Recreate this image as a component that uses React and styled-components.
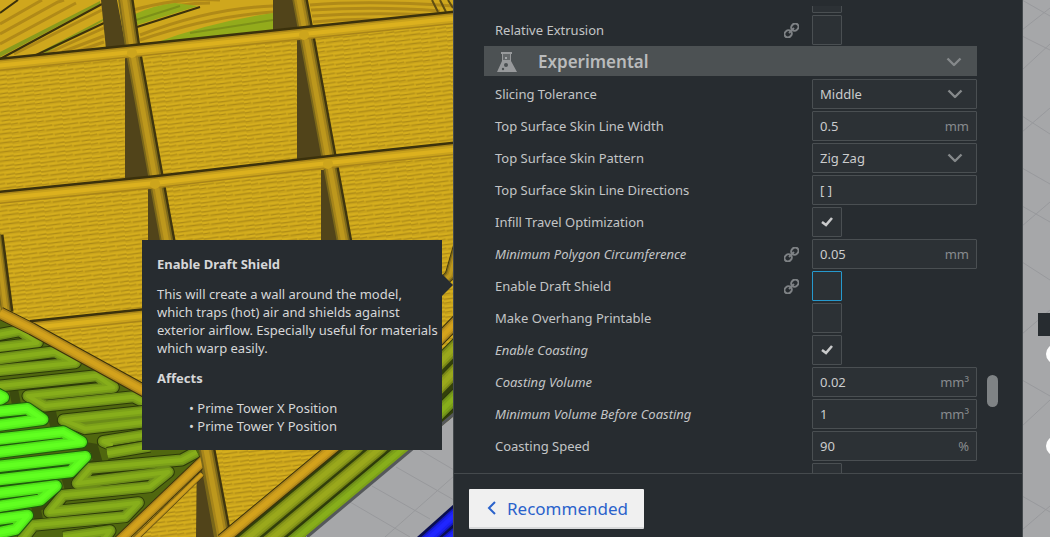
import { useLayoutEffect, useRef } from 'react';
import styled, { createGlobalStyle } from 'styled-components';

const GlobalStyle = createGlobalStyle`
  * {
    box-sizing: border-box;
  }

  body {
    margin: 0;
    background: #a6a7a9;
    color: #cbcccd;
    font-family: 'Noto Sans', sans-serif;
    font-size: 13px;
    line-height: 18px;
  }

  input,
  select,
  button {
    font: inherit;
    color: inherit;
  }
`;

const Workspace = styled.div`
  position: relative;
  display: flex;
  height: 100vh;
  overflow: hidden;
`;

const Scene = styled.svg`
  position: absolute;
  inset: 0;
  width: 100%;
  height: 100%;
`;

const Viewport = styled.main`
  position: relative;
  flex: 1;
  min-width: 0;
`;

const Tooltip = styled.aside`
  position: absolute;
  top: 240px;
  right: 11px;
  display: flex;
  flex-direction: column;
  gap: 12px;
  width: 300px;
  padding: 15px 0 15px 15px;
  background: #272c30;
  color: #d6d7d8;

  &::after {
    content: '';
    position: absolute;
    top: 34px;
    left: 100%;
    border: 11px solid transparent;
    border-right-width: 0;
    border-left-color: #272c30;
  }
`;

const TooltipTitle = styled.h2`
  margin: 0;
  font-size: 13px;
  font-weight: 700;
`;

const TooltipText = styled.p`
  margin: 0;
`;

const AffectsList = styled.ul`
  margin: 0;
  padding: 0 0 0 32px;
  list-style: none;

  li::before {
    content: '• ';
  }
`;

const Panel = styled.section`
  position: relative;
  display: flex;
  flex-direction: column;
  width: 570px;
  margin-right: 27px;
  padding-top: 6px;
  background: #272c30;
  border: solid #454a4d;
  border-width: 0 1px;
`;

const Settings = styled.div`
  flex: 1;
  min-height: 0;
  padding: 0 45px 0 30px;
  overflow-y: auto;
  scrollbar-width: none;
`;

const ScrollThumb = styled.div`
  position: absolute;
  top: 375px;
  right: 24px;
  width: 11px;
  height: 32px;
  border-radius: 6px;
  background: #7f8385;
`;

const Row = styled.div`
  display: flex;
  align-items: center;
  height: 30px;
  margin-bottom: 2px;
  padding-left: 11px;
`;

const Label = styled.label`
  flex: 1;
  color: #c3c5c6;
  font-style: ${(props) => (props.$italic ? 'italic' : 'normal')};
`;

const LinkIcon = styled.svg`
  width: 15px;
  height: 15px;
  margin-right: 13px;
  fill: none;
  stroke: #7e8285;
  stroke-width: 2;
`;

const ControlSlot = styled.div`
  width: 165px;
`;

const Field = styled.div`
  display: flex;
  align-items: center;
  height: 30px;
  padding: 0 7px;
  background: #2c3135;
  border: 1px solid #4a4f52;
  border-radius: 1px;
`;

const TextInput = styled.input`
  flex: 1;
  min-width: 0;
  padding: 0;
  border: 0;
  outline: 0;
  background: none;
`;

const Unit = styled.span`
  color: #888b8e;
`;

const Select = styled.select`
  flex: 1;
  min-width: 0;
  padding: 0;
  border: 0;
  outline: 0;
  background: none;
  appearance: none;
`;

const ChevronIcon = styled.svg`
  width: 16px;
  height: 10px;
  margin-right: ${(props) => props.$inset || 6}px;
  fill: none;
  stroke: #85898b;
  stroke-width: 2.4;
  stroke-linejoin: round;
`;

const CheckSlot = styled.span`
  display: grid;
  width: 30px;
  height: 30px;
  place-items: center;

  & > * {
    grid-area: 1 / 1;
  }
`;

const Checkbox = styled.input`
  width: 30px;
  height: 30px;
  margin: 0;
  appearance: none;
  background: #2c3135;
  border: 1px solid ${(props) => (props.$active ? '#2699cd' : '#4a4f52')};
  border-radius: 1px;
`;

const CheckIcon = styled.svg`
  width: 14px;
  height: 12px;
  fill: none;
  stroke: #c9cacb;
  stroke-width: 2.6;
  pointer-events: none;
`;

const Category = styled.button`
  display: flex;
  align-items: center;
  width: 100%;
  height: 30px;
  margin: -1px 0 3px;
  padding: 2px 0 0 13px;
  border: 0;
  background: #4c5153;
  color: #b9bbbc;
  text-align: left;
`;

const CategoryIcon = styled.svg`
  width: 20px;
  height: 20px;
  margin-right: 21px;
`;

const CategoryTitle = styled.span`
  flex: 1;
  font-size: 17px;
  font-weight: 600;
`;

const Footer = styled.footer`
  padding: 15px 15px 8px;
  border-top: 1px solid #454a4d;
`;

const ModeButton = styled.button`
  display: flex;
  align-items: center;
  gap: 11px;
  height: 40px;
  padding: 2px 16px 0 18px;
  border: 0;
  border-bottom: 2px solid #d8d9da;
  border-radius: 1px;
  background: #f0f0f0;
  color: #2a62cb;
  font-size: 17px;
`;

const BackIcon = styled.svg`
  width: 9px;
  height: 16px;
  fill: none;
  stroke: #2a62cb;
  stroke-width: 2;
`;

const tones = {
  gold: ['#3b310c', '#a98519', '#c9a21c', '#dcb11e'],
  shade: ['#3f350e', '#7a671a', '#a6851b', '#bd981d'],
  orange: ['#3b310c', '#a8821a', '#c8991c', '#d3a21c'],
  olive: ['#2c3a09', '#6c8c19', '#7ca119', '#87ae1b'],
  moss: ['#33400c', '#778516', '#8f9e1a', '#9aa81c'],
  lime: ['#1f5a0e', '#4fdc18', '#5af71d', '#61ff20'],
  blue: ['#0a0f50', '#1318c0', '#1b20f0', '#2026ff'],
};

// rim moves the dark layer aside, so only one side of the ridge casts a shadow
function Ridge({ d, tone = 'gold', width = 11, rim }) {
  const steps = [rim ? -1 : 2, 0, -3, -7];
  return tones[tone].map((color, i) => (
    <path
      key={color}
      d={d}
      fill="none"
      stroke={color}
      strokeWidth={Math.max(width + steps[i] * (width / 11), 1)}
      strokeLinejoin="round"
      transform={rim && i === 0 ? `translate(${rim})` : undefined}
    />
  ));
}

const oliveLoops = [
  'M-9 -75 L60 -88 L112 -52 L-9 -37',
  'M-9 -3 L165 -25 L226 8 L-9 32',
  'M-9 79 L290 47 L340 82 L84 108 L135 138 L400 110 L450 135',
  'M450 152 L190 180 L255 206 L450 184',
  'M450 222 L310 244 L338 256',
  'M322 280 L450 258',
  'M590 276 L545 300 L270 325 L232 370 L440 344 L505 336 L450 380 L190 406 L148 456 L350 436 L415 428 L375 470 L100 496 L66 540',
  'M190 532 L330 512 L310 540',
];

const limeLoops = [
  'M-9 102 L10 112 L-9 124',
  'M-9 155 L82 146 L128 178 L-9 196',
  'M-9 238 L190 216 L244 246 L-9 277',
  'M-9 320 L256 290 L212 335 L-9 360',
  'M-9 400 L168 378 L120 420 L-9 440',
  'M-9 478 L82 466 L46 508 L-9 520',
];

function PrintScene() {
  return (
    <Scene viewBox="0 0 1050 537" preserveAspectRatio="xMinYMin slice" aria-hidden="true">
      <defs>
        <pattern
          id="layers"
          width="26"
          height="9"
          patternUnits="userSpaceOnUse"
          patternTransform="rotate(-5)"
        >
          <rect width="26" height="9" fill="#c8a21b" />
          <path d="M0 2 L26 1 M0 6 L26 5" stroke="#d6af1d" strokeWidth="2" />
          <path d="M0 4 L15 3 M17 4 L26 3 M0 8 L7 7 M9 8 L26 7" stroke="#ac8917" strokeWidth="1" />
        </pattern>
        <clipPath id="model">
          <path d="M0 0 H454 V416 L412 450 L305 537 H0 Z" />
        </clipPath>
      </defs>

      <rect width="1050" height="537" fill="#a6a7a9" />
      <g stroke="#98999c" strokeWidth="1">
        <path d="M396 467 L454 500 M385 537 L454 476 M350 502 L410 537 M372 486 L430 519 M420 450 L454 470" />
        <path d="M1022 0 L1050 16 M1022 30 L1050 8 M1022 70 L1050 44 M1022 36 L1050 50 M1022 116 L1050 134 M1022 132 L1050 108 M1022 168 L1050 184 M1022 206 L1050 222 M1022 226 L1050 202 M1022 262 L1050 280 M1022 334 L1050 310 M1022 380 L1050 396 M1022 426 L1050 400 M1022 496 L1050 512 M1022 530 L1050 506" />
      </g>

      <g clipPath="url(#model)">
        <rect width="454" height="537" fill="url(#layers)" />

        <path d="M0 0 H454 V18 L0 62 Z" fill="#cfa71d" />
        <g fill="none" stroke="#b08a18" strokeWidth="3">
          <path d="M0 24 L42 0 M0 34 L58 2 L64 0 M0 44 L76 3 M14 54 L102 10 M46 54 L104 28 M62 52 L104 36 M78 51 L104 42" />
          <path d="M133 10 Q180 -3 220 0 M140 35 Q210 8 273 6 M140 40 Q210 16 273 12 M150 12 Q180 3 210 3" />
          <path d="M310 5 Q370 0 454 6 M311 10 Q380 6 440 11 M312 16 Q370 12 430 15 M313 22 Q350 18 390 20" />
        </g>
        <path d="M0 52 L100 1 L100 4 L0 57 Z M40 52 L103 19 V21 L46 53 Z" fill="#8a9a1c" />
        <path
          d="M0 13 L18 0 M0 59 L102 4 M34 56 L104 23 M137 27 L200 7"
          fill="none"
          stroke="#3b310c"
          strokeWidth="2"
        />
        <path d="M135 14 Q155 5 175 3 L198 6 L137 25 Z" fill="#93ab1b" />
        <path d="M155 43 Q210 22 273 13 V30 Z" fill="#93ab1b" />
        <path d="M136 20 L180 6 M190 33 L273 20" stroke="#7c9018" strokeWidth="2" />
        <path d="M432 0 L438 12 M440 0 L446 12 M448 0 L453 8" stroke="#5f4d12" strokeWidth="2" />

        <g fill="#51441a">
          <path d="M101 0 H117 L126 48 L106 49 Z" />
          <path d="M273 0 H293 L299 30 L273 33 Z" />
          <path d="M125 56 L134 56 L152 181 L125 183 Z" />
          <path d="M297 38 L305 38 L325 162 L297 164 Z" />
          <path d="M148 188 L156 188 L170 244 L148 244 Z" />
          <path d="M321 170 L330 170 L344 244 L321 244 Z" />
          <path d="M197 450 L208 450 L220 537 L196 537 Z" />
        </g>
        <Ridge tone="shade" width={13} rim="3 0" d="M124 -5 L132 50 L156 183 L205 450 L222 545" />
        <Ridge tone="shade" width={13} rim="3 0" d="M298 -5 L305 32 L329 163 L345 250" />
        <Ridge tone="shade" width={10} rim="3 0" d="M-4 235 L6 312" />
        <Ridge rim="0 -3" d="M-5 66 L132 52 L304 34 L460 18" />
        <Ridge rim="0 -3" d="M-5 199 L155 183 L328 163 L460 149" />
        <Ridge rim="0 -3" d="M30 328 L240 306" />
        <Ridge tone="shade" width={9} d="M460 240 L450 275 L430 295" />
        <g fill="#cda51c">
          <circle cx="132" cy="53" r="5" />
          <circle cx="304" cy="35" r="5" />
          <circle cx="155" cy="184" r="5" />
          <circle cx="328" cy="164" r="5" />
        </g>

        <path d="M0 316 L30 330 L142 392 L205 452 L118 537 H0 Z" fill="#50670f" />
        <path
          d="M12 382 L18 412 L52 414 L58 442 L94 448 L98 462 L66 478 L70 492 L36 508 L40 526"
          fill="none"
          stroke="#3b4a0e"
          strokeWidth="9"
        />
        <g transform="translate(0 360) scale(0.3333)">
          {oliveLoops.map((d) => (
            <Ridge key={d} tone="olive" width={33} d={d} />
          ))}
          {limeLoops.map((d) => (
            <Ridge key={d} tone="lime" width={34} d={d} />
          ))}
        </g>
        <Ridge tone="orange" width={11} d="M0 313 L32 329 L150 394" />
        <Ridge tone="orange" width={10} d="M204 460 L116 544" />
        <Ridge tone="orange" width={5} d="M202 474 L130 544" />
        <Ridge tone="shade" width={14} rim="3 0" d="M205 444 L224 545" />

        <path d="M228 537 L454 350 V416 L305 537 Z" fill="#33400c" />
        <Ridge tone="orange" width={11} d="M222 540 L335 446 L460 318" />
        <Ridge tone="moss" width={13} d="M242 543 L356 448 L460 342" />
        <Ridge tone="moss" width={13} d="M264 545 L380 448 L460 366" />
        <Ridge tone="olive" width={13} d="M286 547 L404 448 L460 392" />
      </g>
      <path d="M307 537 L454 414" stroke="#55585b" strokeWidth="3" />
      <path d="M417 537 L454 504 V537 Z" fill="#0a0f50" />
      <Ridge tone="blue" width={12} d="M416 550 L460 510" />
      <Ridge tone="blue" width={12} d="M434 552 L460 530" />

      <path d="M1038 313 H1050 V336 H1038 Z" fill="#272c30" />
      <circle cx="1056" cy="354" r="10" fill="#ffffff" />
      <circle cx="1056" cy="446" r="10" fill="#ffffff" />
    </Scene>
  );
}

function Chevron({ inset }) {
  return (
    <ChevronIcon $inset={inset} viewBox="0 0 16 10" aria-hidden="true">
      <path d="M1.5 1.5 L8 8 L14.5 1.5" />
    </ChevronIcon>
  );
}

function Control({ id, setting }) {
  const { type, value, unit, checked, active, ariaLabel } = setting;

  if (type === 'check') {
    return (
      <CheckSlot>
        <Checkbox
          id={id}
          type="checkbox"
          defaultChecked={checked}
          aria-label={ariaLabel}
          $active={active}
        />
        {checked ? (
          <CheckIcon viewBox="0 0 14 12" aria-hidden="true">
            <path d="M2 6 L6 9 L12 2" />
          </CheckIcon>
        ) : null}
      </CheckSlot>
    );
  }

  if (type === 'select') {
    return (
      <Field>
        <Select id={id} defaultValue={value}>
          <option>{value}</option>
        </Select>
        <Chevron />
      </Field>
    );
  }

  return (
    <Field>
      <TextInput id={id} type="text" defaultValue={value} />
      {unit ? <Unit>{unit}</Unit> : null}
    </Field>
  );
}

function SettingRow({ setting }) {
  return (
    <Row>
      <Label htmlFor={setting.id} $italic={setting.italic}>
        {setting.label}
      </Label>
      {setting.linked ? (
        <LinkIcon viewBox="0 0 15 15" aria-hidden="true">
          <g transform="rotate(-45 7.5 7.5)">
            <rect x="-1" y="4.2" width="7.6" height="6.6" rx="3.3" />
            <rect x="8.4" y="4.2" width="7.6" height="6.6" rx="3.3" />
            <path d="M4 7.5 H11" />
          </g>
        </LinkIcon>
      ) : null}
      <ControlSlot>
        <Control id={setting.id} setting={setting} />
      </ControlSlot>
    </Row>
  );
}

const specialModes = [
  { id: 'spiralize', type: 'check', ariaLabel: 'Smooth Spiralized Contours' },
  { id: 'relative', label: 'Relative Extrusion', type: 'check', linked: true },
];

const experimental = [
  { id: 'tolerance', label: 'Slicing Tolerance', type: 'select', value: 'Middle' },
  { id: 'skin-width', label: 'Top Surface Skin Line Width', value: '0.5', unit: 'mm' },
  { id: 'skin-pattern', label: 'Top Surface Skin Pattern', type: 'select', value: 'Zig Zag' },
  { id: 'skin-directions', label: 'Top Surface Skin Line Directions', value: '[ ]' },
  { id: 'travel', label: 'Infill Travel Optimization', type: 'check', checked: true },
  {
    id: 'polygon',
    label: 'Minimum Polygon Circumference',
    value: '0.05',
    unit: 'mm',
    italic: true,
    linked: true,
  },
  { id: 'draft', label: 'Enable Draft Shield', type: 'check', linked: true, active: true },
  { id: 'overhang', label: 'Make Overhang Printable', type: 'check' },
  { id: 'coasting', label: 'Enable Coasting', type: 'check', checked: true, italic: true },
  { id: 'volume', label: 'Coasting Volume', value: '0.02', unit: 'mm³', italic: true },
  {
    id: 'min-volume',
    label: 'Minimum Volume Before Coasting',
    value: '1',
    unit: 'mm³',
    italic: true,
  },
  { id: 'speed', label: 'Coasting Speed', value: '90', unit: '%' },
  { id: 'alternate', type: 'check', ariaLabel: 'Alternate Skin Rotation' },
];

export default function App() {
  const settingsRef = useRef(null);

  useLayoutEffect(() => {
    settingsRef.current.scrollTop = 23;
  }, []);

  return (
    <>
      <GlobalStyle />
      <Workspace>
        <PrintScene />
        <Viewport>
          <Tooltip role="tooltip">
            <TooltipTitle>Enable Draft Shield</TooltipTitle>
            <TooltipText>
              This will create a wall around the model,
              <br />
              which traps (hot) air and shields against
              <br />
              exterior airflow. Especially useful for materials
              <br />
              which warp easily.
            </TooltipText>
            <TooltipTitle as="h3">Affects</TooltipTitle>
            <AffectsList>
              <li>Prime Tower X Position</li>
              <li>Prime Tower Y Position</li>
            </AffectsList>
          </Tooltip>
        </Viewport>
        <Panel>
          <Settings ref={settingsRef}>
            {specialModes.map((setting) => (
              <SettingRow key={setting.id} setting={setting} />
            ))}
            <Category type="button">
              <CategoryIcon viewBox="0 0 20 20" aria-hidden="true">
                <path d="M4 0 H15 V2 H14 V9 L20 20 H0 L5 9 V2 H4 Z" fill="#97999b" />
                <path d="M6 2 H13 V8 H6 Z" fill="#65696b" />
                <circle cx="9" cy="6" r="1" fill="#b9bbbc" />
                <circle cx="9" cy="13" r="2" fill="#4c5153" />
                <circle cx="6" cy="17" r="1.2" fill="#4c5153" />
              </CategoryIcon>
              <CategoryTitle>Experimental</CategoryTitle>
              <Chevron inset={15} />
            </Category>
            {experimental.map((setting) => (
              <SettingRow key={setting.id} setting={setting} />
            ))}
          </Settings>
          <ScrollThumb />
          <Footer>
            <ModeButton type="button">
              <BackIcon viewBox="0 0 9 16" aria-hidden="true">
                <path d="M8 1 L2 7 L8 13" />
              </BackIcon>
              Recommended
            </ModeButton>
          </Footer>
        </Panel>
      </Workspace>
    </>
  );
}
